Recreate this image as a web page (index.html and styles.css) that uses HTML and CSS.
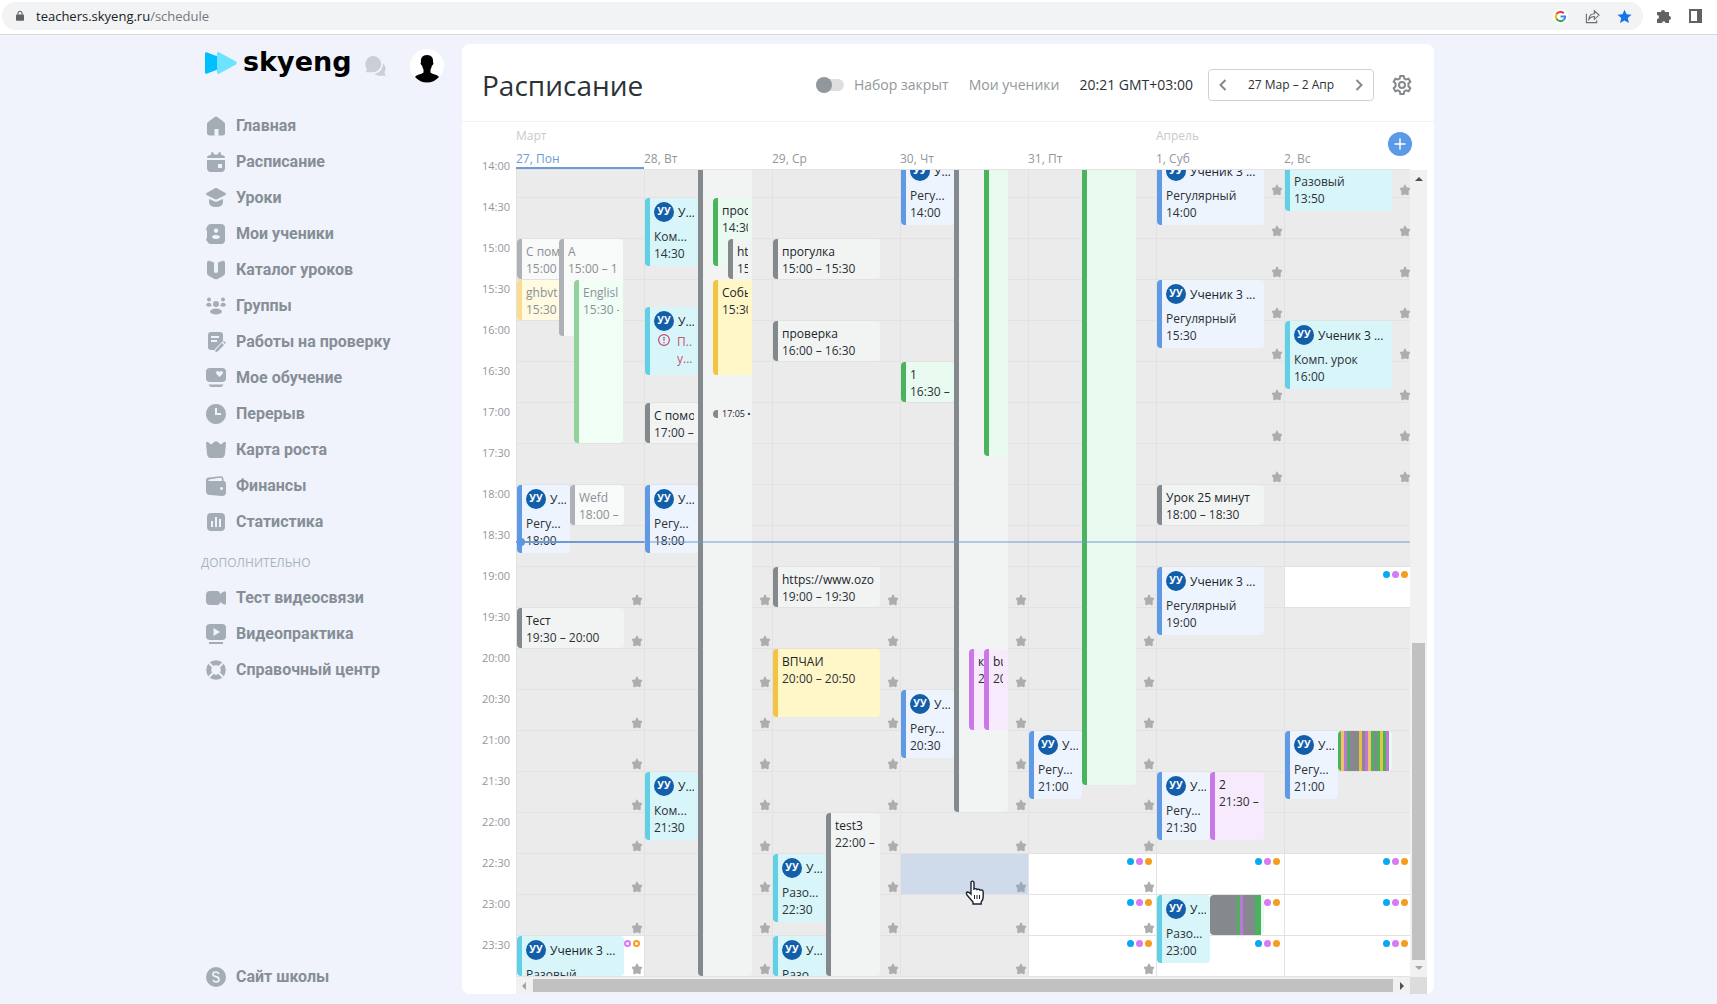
FILE: index.html
```html
<!DOCTYPE html>
<html lang="ru">
<head>
<meta charset="utf-8">
<title>Расписание</title>
<link rel="stylesheet" href="styles.css">
</head>
<body>
<header class="browser">
  <label class="address">
    <svg class="lock" viewBox="0 0 10 14"><path d="M1 5h8a1 1 0 0 1 1 1v6a1 1 0 0 1-1 1H1a1 1 0 0 1-1-1V6a1 1 0 0 1 1-1z" fill="#5f6368"/><path d="M2.500 5.500V3.500a2.500 2.500 0 0 1 5 0v2" fill="none" stroke="#5f6368" stroke-width="1.400"/></svg>
    <span class="url">teachers.skyeng.ru<span class="url-path">/schedule</span></span>
    <svg class="ext" viewBox="0 0 16 16"><circle cx="8" cy="8" r="8" fill="#fff"/><g fill="none" stroke-width="2.200"><path d="M11.600 4.600A5 5 0 0 0 3.700 5.500" stroke="#ea4335"/><path d="M3.700 5.500a5 5 0 0 0 0 5" stroke="#fbbc05"/><path d="M3.700 10.500a5 5 0 0 0 7.500 1.300" stroke="#34a853"/><path d="M11.200 11.800A5 5 0 0 0 13 8H8" stroke="#4285f4"/></g></svg>
    <svg class="ext" viewBox="0 0 16 16" fill="none" stroke="#6b6f74" stroke-width="1.200"><path d="M1.500 5v9.500h11V12M4 11c.5-4 3-6 6-6V2l5 4.500L10 11V8c-3 0-4.500 1-6 3z"/></svg>
    <svg class="ext" viewBox="0 0 16 16"><path d="M8 .8l2.200 4.900 5.300.5-4 3.500 1.200 5.300L8 12.200 3.300 15l1.200-5.300-4-3.500 5.300-.5z" fill="#1a73e8"/></svg>
  </label>
  <svg class="ext" viewBox="0 0 16 16"><path d="M1 4h4a2 2 0 1 1 4 0h4v4a2 2 0 1 1 0 4v3H9.500a1.700 1.700 0 1 0-3.400 0H1v-4a2 2 0 1 0 0-4z" fill="#5f6368"/></svg>
  <svg class="ext" viewBox="0 0 16 16"><path d="M2 2h11v12H2z" fill="none" stroke="#5f6368" stroke-width="2"/><path d="M9 2h5v12H9z" fill="#5f6368"/></svg>
</header>

<div class="app">
  <aside class="sidebar">
    <div class="brand">
      <svg class="mark" viewBox="0 0 32 22"><path d="M0 1.500Q0 0 1.500.2L14 5v12L1.500 21.800Q0 22 0 20.500z" fill="#00bfff"/><path d="M12 1.500Q12.300-.5 14 .3L31 9.500q1.500 1.500 0 3L14 21.700q-1.700.8-2-1.200z" fill="#6de3ff"/></svg>
      <a class="wordmark" href="#">skyeng</a>
      <svg class="chat" viewBox="0 0 22 22" fill="#c9ced7"><path d="M8.500 0a8.500 8.500 0 0 1 0 17H1.500q-1 0-.5-1l1-2.500A8.500 8.500 0 0 1 8.500 0z"/><path d="M18.800 7.500a7 7 0 0 1 1.500 9.500l1 2.700q.3 1-.7 1H15a7 7 0 0 1-5-2.200c5 0 9-4.500 8.800-11z"/></svg>
      <svg class="user" viewBox="0 0 34 34"><circle cx="17" cy="17" r="17" fill="#fff"/><path d="M17 6c4.500 0 6.500 3 6 7 1 1 0 3-1 3.500-.5 2-1 3-1.500 4v3c2.500 2 7 2 8.500 4.500Q24 33.500 17 33.500T5 28c1.500-2.500 6-2.500 8.500-4.500v-3c-.5-1-1-2-1.500-4-1-.5-2-2.500-1-3.500-.5-4 1.500-7 6-7z"/></svg>
    </div>
    <nav class="menu">
      <a href="#"><svg viewBox="0 0 20 20"><path d="M8.700 1q1.300-1 2.600 0L18 6q1 .8 1 2v9q0 2.500-2.500 2.500H12.500V13h-4v6.500H4Q1 19.500 1 17V8q0-1.200 1-2z"/></svg>Главная</a>
      <a href="#"><svg viewBox="0 0 20 20"><path d="M1 6q0-3 4-3V1.500q0-1.500 1.300-1.500T8 2.500h4Q12 0 13.500 0T15 1.500V3q4 0 4 3zM1 8h18v8q0 4-4 4H5q-4 0-4-4zm11 4v4h4v-4z" fill-rule="evenodd"/></svg>Расписание</a>
      <a href="#"><svg viewBox="0 0 20 20"><path d="M8.500.5q1.500-.8 3 0l8 4.500q1 1 0 2l-8 4q-1.500.8-3 0l-8-4q-1-1 0-2zM3 11l6 2.500q1 .5 2 0l6-2.500v3q0 5-7 5t-7-5z"/></svg>Уроки</a>
      <a href="#"><svg viewBox="0 0 20 20"><path d="M5 0h10q4 0 4 4v12q0 4-4 4H5q-3 0-4-3l-1-1 1-3V7L0 5l1-2q1-3 4-3zm5 4.500a2.200 2.200 0 1 0 .1 0zM6 13c0 2.500 8 2.500 8 0s-8-3-8 0z" fill-rule="evenodd"/></svg>Мои ученики</a>
      <a href="#"><svg viewBox="0 0 20 20"><path d="M1 3q0-3 3-2l4 1.500V12q2 2 4 0V2.500L16 1q3-1 3 2v10q0 2-2 3l-5.500 3q-1.500.7-3 0L3 16q-2-1-2-3z"/></svg>Каталог уроков</a>
      <a href="#"><svg viewBox="0 0 20 20"><circle cx="10" cy="8" r="3"/><circle cx="3" cy="3.500" r="2"/><circle cx="17" cy="3.500" r="2"/><ellipse cx="10" cy="15.500" rx="6" ry="3"/><path d="M0 9q1-3 4.500-2L6 10Q1 12 0 9zM20 9q-1-3-4.500-2L14 10q5 2 6-1z"/></svg>Группы</a>
      <a href="#"><svg viewBox="0 0 20 20"><path d="M5 0h9q3 0 3 3v6l-8 8v1H5q-3 0-3-3V3q0-3 3-3zm0 4v2h8V4zm0 4v2h6V8zM16 11l2 2-7 7-2-.5.5-1.500zM18 9l2 2-1 1-2-2z" fill-rule="evenodd"/></svg>Работы на проверку</a>
      <a href="#"><svg viewBox="0 0 20 20"><path d="M4 0h12q4 0 4 4v6q0 4-4 4H4q-4 0-4-4V4q0-4 4-4zm9.500 9l3.200-3.200Q17.500 3 15 3l-1.500 1L12 3q-2.500 0-1.700 2.800zM2.500 16.500h15q-1 2.500-3 2.500h-9q-2 0-3-2.500z" fill-rule="evenodd"/></svg>Мое обучение</a>
      <a href="#"><svg viewBox="0 0 20 20"><path d="M10 0a10 10 0 1 1-.1 0zM9 4v7h6V9h-4V4z" fill-rule="evenodd"/></svg>Перерыв</a>
      <a href="#"><svg viewBox="0 0 20 20"><path d="M0 3q1-2 2.500-.5L5 4.500l4-3q1-1 2 0l4 3 2.500-2Q19 1 20 3l-1 11q-.5 4-4 4H5q-3.500 0-4-4z"/></svg>Карта роста</a>
      <a href="#"><svg viewBox="0 0 20 20"><path d="M0 4Q0 1.500 3 1.500L14 .3q3.500-.3 3.500 3V5q2.500 0 2.500 3v8q0 4-4 4l-12-1q-4 0-4-4zm3-.5q-2 1.500 1 1.500h12V3.500q0-2-2-1.700zM15.500 11a1.500 1.500 0 1 0 .1 0z" fill-rule="evenodd"/></svg>Финансы</a>
      <a href="#"><svg viewBox="0 0 20 20"><path d="M5 1h10q4 0 4 4v10q0 4-4 4H5q-4 0-4-4V5q0-4 4-4zM5 9v6h2V9zm4-4v10h2V5zm4 2v8h2V7z" fill-rule="evenodd"/></svg>Статистика</a>
    </nav>
    <h2 class="menu-title">ДОПОЛНИТЕЛЬНО</h2>
    <nav class="menu">
      <a href="#"><svg viewBox="0 0 20 20"><path d="M4 3h7q3 0 3 3l3-2q3-2 3 1v10q0 3-3 1l-3-2q0 3-3 3H4q-4 0-4-4V7q0-4 4-4z"/></svg>Тест видеосвязи</a>
      <a href="#"><svg viewBox="0 0 20 20"><path d="M4 0h12q4 0 4 4v8q0 4-4 4H4q-4 0-4-4V4q0-4 4-4zm3.500 4v8L14 8zM3 18h14v2H3z" fill-rule="evenodd"/></svg>Видеопрактика</a>
      <a href="#"><svg viewBox="0 0 20 20"><circle cx="10" cy="10" r="7.300" fill="none" stroke="#a4adb5" stroke-width="5"/><path d="M3 3l4 4M17 3l-4 4M3 17l4-4M17 17l-4-4" stroke="#f0f3fc" stroke-width="2"/></svg>Справочный центр</a>
    </nav>
    <nav class="menu menu-bottom">
      <a href="#"><svg viewBox="0 0 20 20"><circle cx="10" cy="10" r="10"/><path d="M13 7q-1-2-3-2-3 0-3 2.200Q7 9 10 9.700t3 2.800Q13 15 10 15q-2 0-3-2" fill="none" stroke="#f0f3fc" stroke-width="1.700"/></svg>Сайт школы</a>
    </nav>
  </aside>

  <main class="panel">
    <header class="toolbar">
      <h1>Расписание</h1>
      <label class="switch"><input type="checkbox">Набор закрыт</label>
      <a class="students" href="#">Мои ученики</a>
      <time class="clock">20:21 GMT+03:00</time>
      <div class="range">
        <button aria-label="Предыдущая неделя"><svg viewBox="0 0 8 12"><path d="M6.500 1L1.500 6l5 5"/></svg></button>
        <span>27 Мар – 2 Апр</span>
        <button aria-label="Следующая неделя"><svg viewBox="0 0 8 12"><path d="M1.500 1l5 5-5 5"/></svg></button>
      </div>
      <button class="settings" aria-label="Настройки"><svg viewBox="0 0 20 20"><path d="M8.300 1h3.400l.6 2.500 1.800 1 2.500-.8 1.700 3-1.900 1.800v2.800l1.900 1.900-1.700 3-2.500-.8-1.800 1-.6 2.600H8.300l-.6-2.600-1.800-1-2.500.8-1.700-3 1.900-1.900V8.500L1.700 6.700l1.700-3 2.500.8 1.800-1z"/><circle cx="10" cy="10" r="3"/></svg></button>
    </header>
    <section class="calendar">
      <div class="days">
        <div class="day-name today"><span>Март</span><b>27, Пон</b></div>
        <div class="day-name"><b>28, Вт</b></div>
        <div class="day-name"><b>29, Ср</b></div>
        <div class="day-name"><b>30, Чт</b></div>
        <div class="day-name"><b>31, Пт</b></div>
        <div class="day-name"><span>Апрель</span><b>1, Суб</b></div>
        <div class="day-name"><b>2, Вс</b></div>
        <button class="add" aria-label="Добавить"><svg viewBox="0 0 12 12"><path d="M6 .5v11M.5 6h11"/></svg></button>
      </div>
      <div class="times" id="times"></div>
      <div class="viewport">
        <div class="week" id="week"></div>
      </div>
      <div class="vbar"><i class="arrow up"></i><i class="vthumb"></i><i class="arrow down"></i></div>
      <div class="hbar"><i class="arrow left"></i><i class="hthumb"></i><i class="arrow right"></i></div>
      <div class="corner"></div>
    </section>
  </main>
</div>
<script src="schedule.js"></script>
</body>
</html>
```
FILE: styles.css
```css
* { box-sizing: border-box; }

body {
  margin: 0;
  height: 100vh;
  display: flex;
  flex-direction: column;
  overflow: hidden;
  background: #f0f3fc;
  color: #2d3236;
  font: 12px/17px "Open Sans", "Noto Sans", sans-serif;
}

a { color: inherit; text-decoration: none; }
button { padding: 0; border: 0; background: none; font: inherit; color: inherit; }
svg { display: block; flex: none; }

/* browser bar */
.browser {
  flex: none;
  display: flex;
  align-items: center;
  gap: 16px;
  height: 35px;
  padding: 0 13px 2px 2px;
  background: #fff;
  border-bottom: 1px solid #d9dadd;
}
.address {
  flex: 1;
  display: flex;
  align-items: center;
  gap: 16px;
  height: 28px;
  padding: 0 11px 0 14px;
  margin-right: -3px;
  border-radius: 14px;
  background: #f1f3f4;
}
.lock { width: 8px; height: 12px; margin-right: -4px; }
.url { flex: 1; font-size: 13px; color: #202124; }
.url-path { color: #73777b; }
.ext { width: 16px; height: 16px; }
.address .ext { width: 15px; height: 15px; margin-left: 1px; }

/* page frame */
.app {
  flex: 1;
  min-height: 0;
  display: flex;
  padding: 9px 283px 10px 200px;
}
.sidebar {
  flex: none;
  width: 262px;
  display: flex;
  flex-direction: column;
}
.brand {
  display: flex;
  align-items: center;
  height: 44px;
  margin-bottom: 20px;
  padding: 0 18px 0 5px;
}
.mark { width: 32px; height: 22px; margin: 0 6px 6px 0; }
.wordmark { flex: 1; margin-bottom: 9px; font: bold 27px/28px "DejaVu Sans", sans-serif; color: #000; }
.chat { width: 21px; height: 21px; margin-right: 24px; }
.user { width: 34px; height: 34px; }
.menu a {
  display: flex;
  align-items: center;
  gap: 10px;
  height: 36px;
  padding-left: 6px;
  font: bold 16px/20px Roboto, sans-serif;
  color: #868e96;
}
.menu svg { width: 20px; height: 20px; fill: #a4adb5; }
.menu-title { margin: 14px 0 9px 1px; font: 12px/17px "Open Sans", sans-serif; color: #a9b3bf; }
.menu-bottom { margin: auto 0 -1px; }

/* schedule panel */
.panel {
  flex: 1;
  min-width: 0;
  display: flex;
  flex-direction: column;
  overflow: hidden;
  border-radius: 8px;
  background: #fff;
}
.toolbar {
  flex: none;
  display: flex;
  align-items: center;
  height: 78px;
  padding: 4px 22px 0 20px;
  border-bottom: 1px solid #f1f2f4;
  font-size: 14px;
}
.toolbar h1 { flex: 1; margin: 0; font-size: 28px; line-height: 36px; font-weight: 400; }
.switch { display: flex; align-items: center; gap: 10px; color: #92979b; }
.switch input {
  appearance: none;
  width: 28px;
  height: 12px;
  margin: 0;
  border-radius: 6px;
  background: #dcdee0;
}
.switch input::before {
  content: "";
  display: block;
  width: 16px;
  height: 16px;
  margin-top: -2px;
  border-radius: 50%;
  background: #92979b;
}
.students { margin: 0 20px; color: #92979b; }
.range {
  display: flex;
  align-items: center;
  justify-content: space-between;
  width: 166px;
  height: 32px;
  margin: 0 18px 0 15px;
  padding: 0 10px;
  border: 1px solid #cfd1d3;
  border-radius: 4px;
  font-size: 12px;
}
.range svg { width: 8px; height: 12px; fill: none; stroke: #85898d; stroke-width: 2; }
.settings svg { width: 20px; height: 20px; fill: none; stroke: #85898d; stroke-width: 2; }

/* calendar */
.calendar {
  flex: 1;
  min-height: 0;
  display: grid;
  grid-template: 48px minmax(0, 1fr) 17px / 34px minmax(0, 1fr) 17px;
  padding: 0 7px 0 20px;
}
.days {
  position: relative;
  grid-column: 2;
  display: grid;
  grid-template-columns: repeat(7, minmax(128px, 1fr));
  border-bottom: 1px solid #e2e3e5;
}
.day-name {
  display: flex;
  flex-direction: column;
  justify-content: flex-end;
  gap: 6px;
  padding-bottom: 2px;
  color: #92979b;
}
.day-name span { color: #c8cacc; }
.day-name b { font-weight: 400; }
.today { padding-bottom: 0; border-bottom: 2px solid #6e9bd5; color: #6e9bd5; }
.add {
  position: absolute;
  right: -2px;
  top: 10px;
  display: grid;
  place-items: center;
  width: 24px;
  height: 24px;
  border-radius: 50%;
  background: #5c9ae8;
}
.add svg { width: 12px; height: 12px; stroke: #fff; stroke-width: 1.5; }
.times {
  grid-column: 1;
  display: flex;
  flex-direction: column;
  justify-content: flex-end;
  color: #92979b;
  font-size: 11px;
  line-height: 18px;
}
.times time { flex: none; height: 41px; }
.viewport { display: flex; align-items: flex-end; overflow: hidden; }
.week {
  position: relative;
  flex: 1 0 auto;
  display: grid;
  grid-template-columns: repeat(7, minmax(128px, 1fr));
}
.day { position: relative; }
.slot {
  display: flex;
  flex-direction: column;
  justify-content: space-between;
  align-items: flex-end;
  height: 41px;
  padding: 4px 1px 1px;
  border: solid #e2e2e2;
  border-width: 0 0 1px 1px;
  background: #ebebeb;
}
.slot.free { background: #fff; }
.slot.hover { background: #cfdaea; }
.star { width: 12px; height: 12px; margin-top: auto; fill: #adadad; }
.hover .star { fill: #9daabd; }
.dots { display: flex; gap: 2px; padding-right: 3px; }
.dots i { width: 7px; height: 7px; border-radius: 50%; background: currentColor; }
.dots.rings i { border: 2px solid currentColor; background: none; }
.dots i:nth-child(1) { color: #0aa8f2; }
.dots i:nth-child(2) { color: #d67bf0; }
.dots i:nth-child(3) { color: #f79d1e; }

.event {
  position: absolute;
  overflow: hidden;
  padding: 4px 4px 0;
  border-left: 5px solid;
  border-radius: 4px;
  white-space: nowrap;
}
.event p { margin: 0; overflow: hidden; }
.event .name { font-weight: 500; color: #202529; }
.lesson p { text-overflow: ellipsis; }
.lesson .head { display: flex; align-items: center; gap: 4px; margin-bottom: 6px; }
.avatar {
  flex: none;
  width: 20px;
  height: 20px;
  border-radius: 50%;
  background: #125ea8;
  color: #fff;
  font: bold 10px/18px "Open Sans", sans-serif;
  text-align: center;
}
.lesson .warn { display: flex; gap: 7px; margin-top: -4px; padding-left: 4px; color: #c4566f; }
.warn svg { width: 12px; height: 12px; margin-top: 1px; fill: none; stroke: #c4447a; stroke-width: 1.2; }
.tiny { padding: 0 0 0 4px; font-size: 9px; line-height: 8px; border-radius: 4px 0 0 4px; }

.blue { border-color: #6099e4; background: #edf4fe; }
.cyan { border-color: #61d0e6; background: #d8f5fa; }
.gray { border-color: #84898d; background: #f2f4f4; }
.green { border-color: #4bb35e; background: #e9fbf1; }
.yellow { border-color: #f5c344; background: #fff7c8; }
.purple { border-color: #ca78e8; background: #f7eafd; }
.past, .past .name { color: #8c9094; }
.gray.past { border-color: #aeb2b6; background: #f8f9f9; }
.green.past { border-color: #91d19c; background: #f1fef6; }
.yellow.past { border-color: #fbdb8f; background: #fffae0; }

.stack { position: absolute; display: flex; overflow: hidden; border-radius: 4px; background: #e9fbf1; }

.now { position: absolute; left: 0; right: 0; top: 384px; height: 2px; background: #6e9bd580; }
.now::before { content: ""; display: block; width: 128px; height: 2px; background: #6e9bd5; }
.now::after {
  content: "";
  position: absolute;
  left: 1px;
  top: -3px;
  width: 8px;
  height: 8px;
  border-radius: 50%;
  background: #5c96e2;
}
.cursor { position: absolute; left: 65px; top: 723px; width: 20px; height: 25px; }

/* scrollbars */
.vbar { display: flex; flex-direction: column; align-items: center; justify-content: space-between; padding: 7px 0; background: #f1f1f1; }
.vthumb { width: 13px; height: 317px; margin: auto 0 6px; background: #c1c1c1; }
.hbar { grid-column: 2; display: flex; align-items: center; justify-content: space-between; gap: 7px; padding: 0 6px; background: #f1f1f1; }
.hthumb { flex: 1; height: 13px; background: #c1c1c1; }
.corner { background: #dcdcdc; }
.arrow { border: 4px solid transparent; }
.arrow.up { border-top: 0; border-bottom-color: #505050; }
.arrow.down { border-bottom: 0; border-top-color: #a3a3a3; }
.arrow.left { border-left: 0; border-right-color: #a3a3a3; }
.arrow.right { border-right: 0; border-left-color: #505050; }
```
FILE: schedule.js
```js
const ROW = 41;
const ROWS = 20;
const FIRST = 14 * 60;

// Lessons are [day, "HH:MM", minutes, left, width, colour, kind]
const lessons = [
  [0, "18:00", 50, 1, 53, "blue", "Регулярный"],
  [0, "23:30", 30, 1, 107, "cyan", "Разовый"],
  [1, "14:30", 50, 1, 53, "cyan", "Комп. урок"],
  [1, "15:50", 50, 1, 53, "cyan", "warn"],
  [1, "18:00", 50, 1, 53, "blue", "Регулярный"],
  [1, "21:30", 50, 1, 53, "cyan", "Комп. урок"],
  [2, "22:30", 50, 1, 53, "cyan", "Разовый"],
  [2, "23:30", 30, 1, 53, "cyan", "Разовый"],
  [3, "14:00", 50, 1, 53, "blue", "Регулярный"],
  [3, "20:30", 50, 1, 53, "blue", "Регулярный"],
  [4, "21:00", 50, 1, 53, "blue", "Регулярный"],
  [5, "14:00", 50, 1, 107, "blue", "Регулярный"],
  [5, "15:30", 50, 1, 107, "blue", "Регулярный"],
  [5, "19:00", 50, 1, 107, "blue", "Регулярный"],
  [5, "21:30", 50, 1, 53, "blue", "Регулярный"],
  [5, "23:00", 50, 1, 53, "cyan", "Разовый"],
  [6, "13:50", 50, 1, 107, "cyan", "Разовый"],
  [6, "16:00", 50, 1, 107, "cyan", "Комп. урок"],
  [6, "21:00", 50, 1, 53, "blue", "Регулярный"]
];

// Personal events, in stacking order
const events = [
  [0, "15:00", 30, 1, 46, "gray past", "С пом", "15:00"],
  [0, "15:30", 30, 1, 46, "yellow past", "ghbvt", "15:30"],
  [0, "15:00", 71, 43, 64, "gray past", "А", "15:00 – 1"],
  [0, "15:30", 120, 58, 49, "green past", "Englisl", "15:30 -"],
  [0, "18:00", 30, 54, 54, "gray past", "Wefd", "18:00 –"],
  [0, "19:30", 30, 1, 107, "gray", "Тест", "19:30 – 20:00"],
  [1, "17:00", 30, 1, 53, "gray", "С помо", "17:00 –"],
  [1, "13:00", 660, 54, 54, "gray", "", ""],
  [1, "14:30", 50, 69, 39, "green", "прос", "14:30"],
  [1, "15:00", 30, 84, 24, "gray", "ht", "15:"],
  [1, "15:30", 70, 69, 39, "yellow", "Собы", "15:30"],
  [2, "15:00", 30, 1, 107, "gray", "прогулка", "15:00 – 15:30"],
  [2, "16:00", 30, 1, 107, "gray", "проверка", "16:00 – 16:30"],
  [2, "19:00", 30, 1, 107, "gray", "https://www.ozo", "19:00 – 19:30"],
  [2, "20:00", 50, 1, 107, "yellow", "ВПЧАИ", "20:00 – 20:50"],
  [2, "22:00", 120, 54, 54, "gray", "test3", "22:00 –"],
  [3, "16:30", 30, 1, 53, "green", "1", "16:30 –"],
  [3, "13:00", 540, 54, 54, "gray", "", ""],
  [3, "13:00", 279, 84, 24, "green", "", ""],
  [3, "20:00", 60, 69, 39, "purple", "к", "2"],
  [3, "20:00", 60, 84, 23, "purple", "bu", "20"],
  [4, "13:00", 520, 54, 54, "green", "", ""],
  [5, "18:00", 30, 1, 107, "gray", "Урок 25 минут", "18:00 – 18:30"],
  [5, "21:30", 50, 54, 54, "purple", "2", "21:30 –"]
];

const COLORS = { g: "#4bb35e", y: "#e3c344", o: "#f9bd6c", p: "#bd78d6", m: "#93819b", s: "#84898d" };
const stacks = [
  [6, "21:00", "gopgmssympogsgygpgg".slice(0, 17)],
  [5, "23:00", "sssssssssgpmsssgg"]
];

const freeSlots = { 0: [19], 4: [17, 18, 19], 5: [17, 18, 19], 6: [10, 17, 18, 19] };

const minutes = t => Number(t.slice(0, 2)) * 60 + Number(t.slice(3)) - FIRST;
const box = (start, dur, left, width) => {
  const top = Math.round(minutes(start) * ROW / 30);
  const height = Math.ceil(dur * ROW / 30) - 1;
  return `top:${top}px;height:${height}px;left:${left}px;width:${width}px`;
};
const STAR = '<svg class="star" viewBox="0 0 12 12"><path d="M6 .6q.5 0 1 1.200L7.800 3.500l2.700.3q1.300.3.400 1.400L9.700 7v3.200q0 1.300-1.200 1L6 10.300l-2.500.9q-1.200.3-1.200-1V7L1.100 5.200Q.2 4.100 1.500 3.800l2.700-.3L5 1.800Q5.500.6 6 .6z"/></svg>';
const WARN = '<svg viewBox="0 0 12 12"><circle cx="6" cy="6" r="5.400"/><path d="M6 2.800v4M6 8v1.300"/></svg>';

const times = document.getElementById("times");
for (let r = 0; r < ROWS; r++) {
  const hour = 14 + Math.floor(r / 2);
  times.insertAdjacentHTML("beforeend", `<time>${hour}:${r % 2 ? "30" : "00"}</time>`);
}

const week = document.getElementById("week");
for (let d = 0; d < 7; d++) {
  let html = "";
  for (let r = 0; r < ROWS; r++) {
    const free = (freeSlots[d] || []).includes(r);
    const hover = d === 3 && r === 17;
    const star = d < 5 ? r >= 10 : r < 8;
    html += `<div class="slot${free ? " free" : ""}${hover ? " hover" : ""}">`
      + (free ? `<span class="dots${d === 0 ? " rings" : ""}"><i></i><i></i><i></i></span>` : "")
      + (star ? STAR : "") + "</div>";
  }
  for (const [day, start, dur, left, width, color, kind] of lessons) {
    if (day !== d) continue;
    const short = width < 60;
    const label = short ? kind.slice(0, kind[0] === "К" ? 3 : 4) + "..." : kind;
    const detail = kind === "warn"
      ? `<div class="warn">${WARN}<div><p>П..</p><p>у...</p></div></div>`
      : `<p>${label}</p><p>${start}</p>`;
    html += `<article class="event lesson ${color}" style="${box(start, dur, left, width)}">`
      + `<div class="head"><span class="avatar">УУ</span><p class="name">${short ? "У..." : "Ученик 3 ..."}</p></div>${detail}</article>`;
  }
  for (const [day, start, dur, left, width, color, name, time] of events) {
    if (day !== d) continue;
    html += `<article class="event ${color}" style="${box(start, dur, left, width)}">`
      + (name ? `<p class="name">${name}</p><p>${time}</p>` : "") + "</article>";
  }
  if (d === 1) html += `<article class="event tiny gray" style="${box("17:05", 6, 69, 39)}"><p class="name">17:05 •</p></article>`;
  for (const [day, start, stripes] of stacks) {
    if (day !== d) continue;
    html += `<div class="stack" style="${box(start, 30, 54, 54)}">`
      + [...stripes].map(s => `<i style="width:3px;background:${COLORS[s]}"></i>`).join("") + "</div>";
  }
  if (d === 3) html += '<svg class="cursor" viewBox="0 0 20 25"><path d="M6 2q2-2 3 .5V9q2-1 3 .5 2-1 3 .7 3-1 3.200 1.800V17q0 3-2 5v2H8v-2L2 15q-1.500-2.500.5-3Q4 12 6 14z" fill="#fff" stroke="#1c2230" stroke-width="1.400"/><path d="M9.500 15v4M12 15v4M14.500 15v4" stroke="#1c2230"/></svg>';
  week.insertAdjacentHTML("beforeend", `<div class="day">${html}</div>`);
}
week.insertAdjacentHTML("beforeend", '<div class="now"></div>');
```
